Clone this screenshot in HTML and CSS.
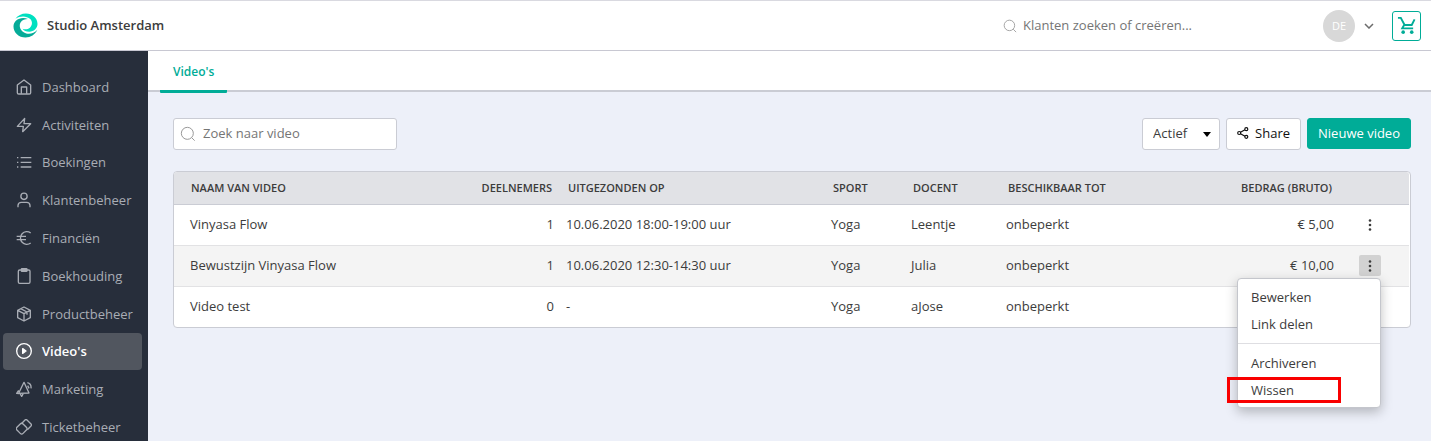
FILE: index.html
```html
<!DOCTYPE html>
<html lang="nl">
<head>
<meta charset="utf-8">
<meta name="viewport" content="width=device-width, initial-scale=1">
<title>Video's – Studio Amsterdam</title>
<link rel="stylesheet" href="styles.css">
</head>
<body>
<header class="topbar">
  <a class="brand" href="#">
    <svg class="brand-logo" viewBox="0 0 26 26" aria-hidden="true">
      <path fill="#00e0c0" d="M2.500 6C5 2.500 9 0.500 13.500 0.500C20 0.500 25.500 5 25.500 11.500C25.500 16 21.500 19.500 17 19.500C13.500 19.500 11 18.300 10 16.300C12.500 17.300 15.500 17 17.300 15.500C20.300 13 20.500 9 18 6.300C14 2.800 7.500 2.800 2.500 6Z"/>
      <path fill="#05ab98" d="M15.500 6.300C11.500 4.300 6.500 5 3 8C1.500 9.500 0.500 11.500 0.500 14C0.500 20.500 6 25.500 13 25.500C18.500 25.500 23 22.500 25.300 17.500C22 21.500 15.500 22.800 11.500 20.300C7 17.700 6 13 8 9.700C9.500 7.300 12.500 6.300 15.500 6.300Z"/>
    </svg>
    <span>Studio Amsterdam</span>
  </a>
  <label class="client-search">
    <svg class="icon icon-thin" viewBox="0 0 24 24" aria-hidden="true"><circle cx="11" cy="11" r="9"/><path d="M17.500 17.500L22.500 22.500"/></svg>
    <input type="search" placeholder="Klanten zoeken of creëren..." aria-label="Klanten zoeken of creëren">
  </label>
  <button class="account" type="button" aria-label="Account">
    <span class="avatar">DE</span>
    <svg class="chevron" viewBox="0 0 10 6" aria-hidden="true"><path d="M1 1L5 5L9 1"/></svg>
  </button>
  <button class="cart" type="button" aria-label="Winkelwagen">
    <svg viewBox="0 0 20 20" aria-hidden="true"><path d="M1 2H4L8 9.500H15.500L18.500 3.500M7.500 9.500L5.500 13H17"/><circle cx="6.500" cy="17" r="1.900"/><circle cx="15.500" cy="17" r="1.900"/></svg>
  </button>
</header>
<div class="shell">
  <nav class="sidebar">
    <div class="nav-group">
      <a class="nav-item" href="#"><svg class="icon" viewBox="0 0 24 24" aria-hidden="true"><path d="M2 9L12 1.500L22 9V20.500A2 2 0 0 1 20 22.500H4A2 2 0 0 1 2 20.500Z"/><path d="M8 22V12H16V22"/></svg>Dashboard</a>
      <a class="nav-item" href="#"><svg class="icon" viewBox="0 0 24 24" aria-hidden="true"><path d="M13 2L2 14H11L10 22L22 10H12Z"/></svg>Activiteiten</a>
    </div>
    <div class="nav-group">
      <a class="nav-item" href="#"><svg class="icon" viewBox="0 0 24 24" aria-hidden="true"><path d="M7 5.500H23M7 12.500H23M7 19.500H23M1.500 5.500H3.500M1.500 12.500H3.500M1.500 19.500H3.500"/></svg>Boekingen</a>
      <a class="nav-item" href="#"><svg class="icon" viewBox="0 0 24 24" aria-hidden="true"><circle cx="12" cy="6.500" r="4.700"/><path d="M3 23V20A5 5 0 0 1 8 15.500H16A5 5 0 0 1 21 20V23"/></svg>Klantenbeheer</a>
      <a class="nav-item" href="#"><svg class="icon" viewBox="0 0 24 24" aria-hidden="true"><path d="M22 4.500A9.500 9.500 0 1 0 22 19.500M1 9.500H15M1 14.500H15"/></svg>Financiën</a>
      <a class="nav-item" href="#"><svg class="icon" viewBox="0 0 24 24" aria-hidden="true"><rect x="3.500" y="3" width="17.500" height="20" rx="2"/><rect x="8" y="1" width="8.500" height="4" rx="1" fill="currentColor"/></svg>Boekhouding</a>
      <a class="nav-item" href="#"><svg class="icon" viewBox="0 0 24 24" aria-hidden="true"><path d="M12 1.500L21.500 6.500V17.500L12 22.500L2.500 17.500V6.500ZM2.500 6.500L12 11.500L21.500 6.500M12 11.500V22.500M7 4L16.500 9V13"/></svg>Productbeheer</a>
    </div>
    <div class="nav-group">
      <a class="nav-item active" href="#" aria-current="page"><svg class="icon" viewBox="0 0 24 24" aria-hidden="true"><circle cx="12" cy="12" r="11"/><path fill="currentColor" d="M10 8.500L15 12L10 15.500Z"/></svg>Video's</a>
      <a class="nav-item" href="#"><svg class="icon" viewBox="0 0 24 24" aria-hidden="true"><path d="M12 2L19.500 18L4 18.500ZM4 14L1 18.500L4.500 19M6 19L8.500 23L11 18.500M17 2.500C21 3.500 23 7 22.500 11M17.500 7L19.500 11"/></svg>Marketing</a>
      <a class="nav-item" href="#"><svg class="icon" viewBox="0 0 24 24" aria-hidden="true"><rect x="2" y="8" width="13" height="13" rx="3" transform="rotate(45 8.500 14.500)"/><path d="M8 7L13.500 1.500Q15 0 16.500 1.500L22.500 7.500Q24 9 22.500 10.500L17 16"/></svg>Ticketbeheer</a>
    </div>
  </nav>
  <main class="content">
    <div class="tabs"><a class="tab" href="#" aria-current="page">Video's</a></div>
    <div class="page">
      <div class="toolbar">
        <label class="video-search">
          <svg class="icon icon-thin" viewBox="0 0 24 24" aria-hidden="true"><circle cx="11" cy="11" r="9"/><path d="M17.500 17.500L22 22"/></svg>
          <input type="search" placeholder="Zoek naar video" aria-label="Zoek naar video">
        </label>
        <div class="select-wrap">
          <select aria-label="Status"><option>Actief</option></select>
          <svg viewBox="0 0 8 5" aria-hidden="true"><path d="M0 0H8L4 5Z"/></svg>
        </div>
        <button class="btn" type="button">
          <svg viewBox="0 0 12 12" aria-hidden="true"><path d="M3.500 5.200L8 2.800M3.500 6.800L8 9.200"/><circle cx="2.200" cy="6" r="1.500"/><circle cx="9.300" cy="2.200" r="1.500"/><circle cx="9.300" cy="9.800" r="1.500"/></svg>
          Share
        </button>
        <button class="btn primary" type="button">Nieuwe video</button>
      </div>
      <div class="panel">
        <table class="videos">
          <colgroup><col><col class="w-count"><col class="w-date"><col class="w-sport"><col class="w-teacher"><col class="w-until"><col class="w-amount"><col class="w-actions"></colgroup>
          <thead>
            <tr><th>NAAM VAN VIDEO</th><th class="num">DEELNEMERS</th><th>UITGEZONDEN OP</th><th>SPORT</th><th>DOCENT</th><th>BESCHIKBAAR TOT</th><th class="num">BEDRAG (BRUTO)</th><th></th></tr>
          </thead>
          <tbody>
            <tr><td>Vinyasa Flow</td><td class="num">1</td><td>10.06.2020 18:00-19:00 uur</td><td>Yoga</td><td>Leentje</td><td>onbeperkt</td><td class="num">€ 5,00</td>
              <td class="actions"><button class="kebab" type="button" aria-label="Acties"><svg viewBox="0 0 4 12" aria-hidden="true"><circle cx="2" cy="1.500" r="1.300"/><circle cx="2" cy="6" r="1.300"/><circle cx="2" cy="10.500" r="1.300"/></svg></button></td></tr>
            <tr class="selected"><td>Bewustzijn Vinyasa Flow</td><td class="num">1</td><td>10.06.2020 12:30-14:30 uur</td><td>Yoga</td><td>Julia</td><td>onbeperkt</td><td class="num">€ 10,00</td>
              <td class="actions">
                <div class="menu-anchor">
                  <button class="kebab open" type="button" aria-label="Acties" aria-expanded="true"><svg viewBox="0 0 4 12" aria-hidden="true"><circle cx="2" cy="1.500" r="1.300"/><circle cx="2" cy="6" r="1.300"/><circle cx="2" cy="10.500" r="1.300"/></svg></button>
                  <div class="menu">
                    <button type="button">Bewerken</button>
                    <button type="button">Link delen</button>
                    <hr>
                    <button type="button">Archiveren</button>
                    <button class="marked" type="button">Wissen</button>
                  </div>
                </div>
              </td></tr>
            <tr><td>Video test</td><td class="num">0</td><td>-</td><td>Yoga</td><td>aJose</td><td>onbeperkt</td><td></td><td></td></tr>
          </tbody>
        </table>
      </div>
    </div>
  </main>
</div>
</body>
</html>
```
FILE: styles.css
```css
* { box-sizing: border-box; }
body {
  margin: 0;
  min-height: 100vh;
  display: flex;
  flex-direction: column;
  overflow: hidden;
  background: #edf0f9;
  color: #3c3c3c;
  font: 13px/20px "Open Sans", "Noto Sans", sans-serif;
}
a { color: inherit; text-decoration: none; }
button, input, select { font: inherit; color: inherit; }
button { cursor: pointer; }
input { flex: 1; min-width: 0; padding: 0 0 2px; border: 0; outline: 0; background: none; }
input::placeholder { color: #757575; opacity: 1; }
.icon {
  flex: none;
  width: 16px;
  height: 16px;
  fill: none;
  stroke: currentColor;
  stroke-width: 2;
  stroke-linejoin: round;
}
.icon-thin { stroke: #999; stroke-width: 1.5; }

.topbar {
  display: flex;
  align-items: center;
  height: 51px;
  padding: 0 10px 0 13px;
  border-top: 1px solid #d9d9e0;
  border-bottom: 1px solid #c8c8d2;
  background: #fff;
}
.brand { display: flex; align-items: center; gap: 9px; margin-right: auto; font-weight: 600; }
.brand span { padding-bottom: 2px; }
.brand-logo { width: 25px; height: 25px; }
.client-search { display: flex; align-items: center; gap: 6px; width: 320px; }
.client-search .icon { width: 14px; height: 14px; }
.account { display: flex; align-items: center; gap: 9px; padding: 0; border: 0; background: none; }
.avatar {
  display: grid;
  place-items: center;
  width: 32px;
  height: 32px;
  border-radius: 50%;
  background: #d8d8d8;
  color: #fff;
  font-size: 11px;
}
.chevron { width: 10px; height: 6px; fill: none; stroke: #6c6c6c; stroke-width: 1.5; }
.cart {
  display: grid;
  place-items: center;
  width: 29px;
  height: 30px;
  margin-left: 18px;
  padding: 0;
  border: 1px solid #00ac97;
  border-radius: 3px;
  background: #fff;
}
.cart svg { width: 19px; height: 19px; fill: none; stroke: #00ac97; stroke-width: 2; }
.cart circle { fill: #00ac97; stroke: none; }

.shell { flex: 1; display: flex; }
.sidebar { flex: none; width: 148px; height: calc(100vh - 51px); overflow: hidden; padding: 18px 6px 0 3px; background: #272e3b; color: #a9adb5; }
.nav-group { display: grid; gap: 1px; }
.nav-item { display: flex; align-items: center; gap: 10px; height: 37px; padding: 0 13px 2px; border-radius: 4px; }
.nav-item .icon { margin-top: 1px; }
.nav-item.active { background: #51565f; color: #fff; font-weight: 600; }

.content { flex: 1; min-width: 0; }
.tabs { display: flex; height: 41px; padding: 0 12px; border-bottom: 2px solid #caccd4; background: #fff; }
.tab { height: 42px; padding: 11px 13px 0; border-bottom: 3px solid #00ac97; border-radius: 1px; color: #00ac97; font-size: 12px; font-weight: 600; }
.page { padding: 26px 20px 0 25px; }
.toolbar { display: flex; gap: 6px; margin-bottom: 21px; }
.video-search, .select-wrap select, .btn { height: 32px; border: 1px solid #caccd4; border-radius: 3px; background: #fff; }
.video-search { display: flex; align-items: center; gap: 7px; width: 224px; margin-right: auto; padding: 0 6px; }
.select-wrap { display: grid; align-items: center; }
.select-wrap select { grid-area: 1 / 1; width: 78px; padding: 0 10px 2px; appearance: none; }
.select-wrap svg { grid-area: 1 / 1; justify-self: end; width: 8px; height: 5px; margin-right: 9px; pointer-events: none; }
.btn { display: flex; align-items: center; gap: 6px; padding: 0 10px 2px; color: #111; }
.btn svg { width: 12px; height: 12px; fill: none; stroke: currentColor; stroke-width: 1.2; }
.btn.primary { height: 31px; border-color: #00ac97; background: #00ac97; color: #fff; }

.panel { padding-right: 1px; border: 1px solid #caccd4; border-radius: 4px; background: #fff; }
.videos { width: 100%; table-layout: fixed; border-collapse: separate; border-spacing: 0; }
.w-count { width: 100px; }
.w-date { width: 265px; }
.w-sport { width: 80px; }
.w-teacher { width: 95px; }
.w-until { width: 200px; }
.w-amount { width: 140px; }
.w-actions { width: 69px; }
.videos th { height: 33px; padding: 0 8px; border-bottom: 1px solid #caccd4; background: #e1e2e6; font-size: 11px; font-weight: 600; text-align: left; white-space: nowrap; }
.videos th:first-child { padding-left: 17px; border-top-left-radius: 3px; }
.videos th:last-child { border-top-right-radius: 3px; }
.videos td { height: 41px; padding: 0 6px 2px; border-bottom: 1px solid #e2e2e4; white-space: nowrap; }
.videos td:first-child { padding-left: 16px; }
.videos tr:last-child td { height: 40px; border-bottom: 0; }
.videos .selected td { background: #f4f4f4; }
.videos .num { text-align: right; }
.videos .actions { padding: 0 28px 1px 19px; }
.kebab { display: grid; place-items: center; width: 22px; height: 21px; padding: 0; border: 0; border-radius: 2px; background: none; }
.kebab.open { background: #d2d2d2; }
.kebab svg { width: 4px; height: 12px; fill: #3c3c3c; }
.menu-anchor { position: relative; width: 22px; }
.menu {
  position: absolute;
  top: 23px;
  right: 0;
  z-index: 1;
  width: 144px;
  padding: 4px 0;
  border: 1px solid #c4c6cc;
  border-radius: 4px;
  background: #fff;
  box-shadow: 0 4px 12px rgba(0, 0, 0, 0.25);
}
.menu button { display: block; width: 100%; height: 27px; padding: 0 13px; border: 0; background: none; text-align: left; }
.menu hr { height: 1px; margin: 6px 0 5px; border: 0; background: #dedee2; }
.menu .marked { position: relative; }
.marked::after { content: ""; position: absolute; inset: 1px 39px 0 -11px; border: 3px solid #f90000; }
```
